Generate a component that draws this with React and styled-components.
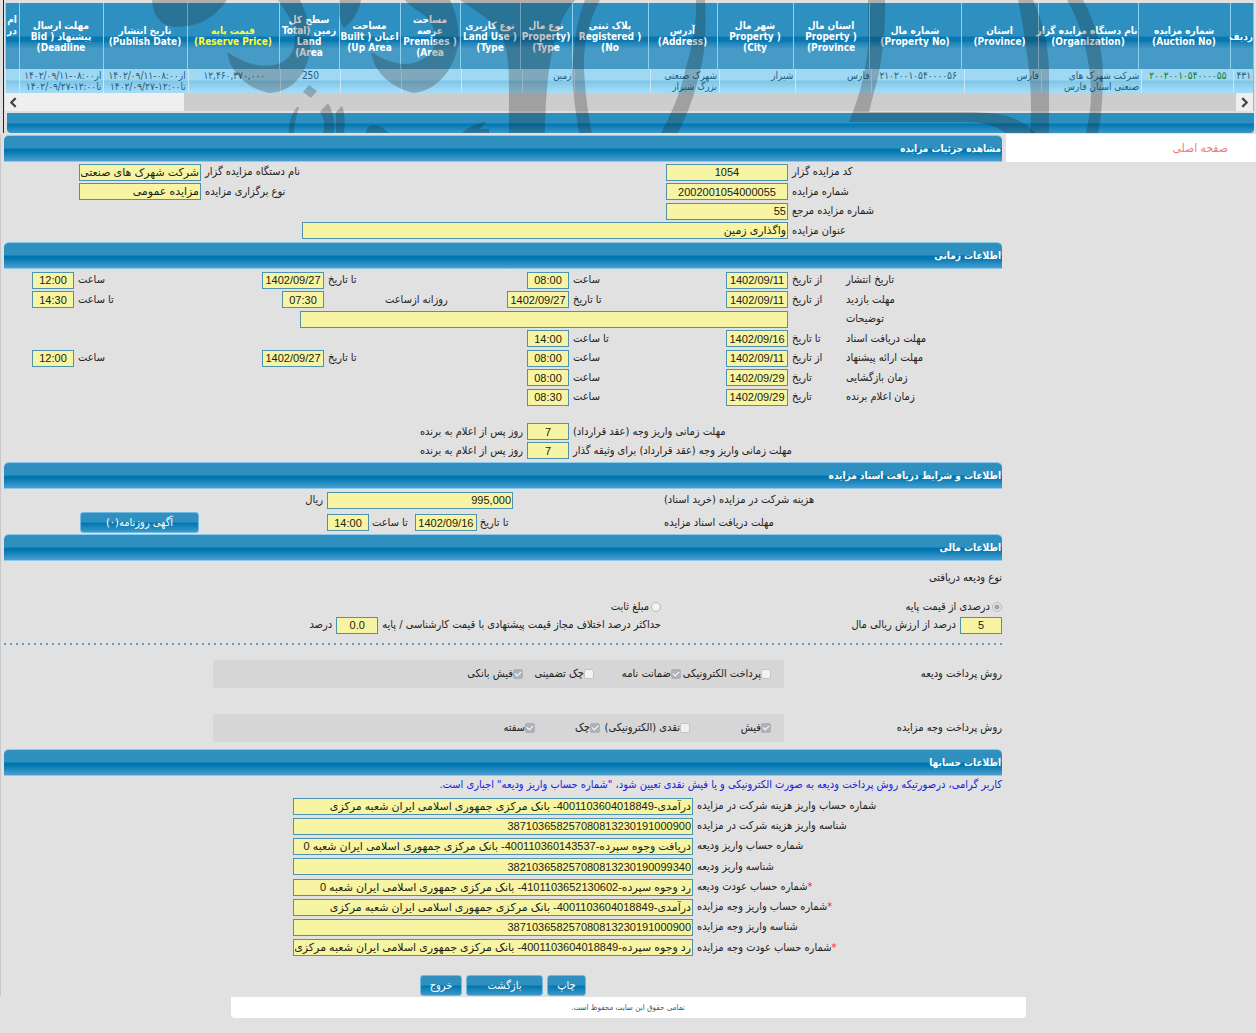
import React, { useId } from "react";
import styled, { createGlobalStyle } from "styled-components";

const columns = [
  { width: 23, lines: ["ردیف"] },
  { width: 92, lines: ["شماره مزایده", "(Auction No)"] },
  { width: 100, lines: ["نام دستگاه مزایده گزار", "(Organization)"] },
  { width: 77, lines: ["استان", "(Province)"] },
  { width: 92, lines: ["شماره مال", "(Property No)"] },
  { width: 76, lines: ["استان مال", "( Property", "Province)"] },
  { width: 76, lines: ["شهر مال", "( Property", "City)"] },
  { width: 69, lines: ["آدرس", "(Address)"] },
  { width: 76, lines: ["پلاک ثبتی", "( Registered", "No)"] },
  { width: 52, lines: ["نوع مال", "(Property", "Type)"] },
  { width: 60, lines: ["نوع کاربری", "( Land Use", "Type)"] },
  { width: 60, lines: ["مساحت", "عرصه", "( Premises", "Area)"] },
  { width: 61, lines: ["مساحت", "اعیان ( Built", "Up Area)"] },
  { width: 60, lines: ["سطح کل", "زمین (Total", "Land", "Area)"] },
  { width: 92, lines: ["قیمت پایه", "(Reserve Price)"], sorted: true },
  { width: 84, lines: ["تاریخ انتشار", "(Publish Date)"] },
  { width: 84, lines: ["مهلت ارسال", "پیشنهاد ( Bid", "Deadline)"] },
  { width: 14, lines: ["ام", "در", "\u00a0", "\u00a0"] },
];

const cells = [
  { lines: ["۴۳۱"], align: "center" },
  { lines: ["۲۰۰۲۰۰۱۰۵۴۰۰۰۰۵۵"], align: "center", green: true },
  { lines: ["شرکت شهرک های", "صنعتی استان فارس"] },
  { lines: ["فارس"] },
  { lines: ["۲۱۰۲۰۰۱۰۵۴۰۰۰۰۵۶"], align: "center" },
  { lines: ["فارس"] },
  { lines: ["شیراز"] },
  { lines: ["شهرک صنعتی", "بزرگ شیراز"] },
  { lines: [] },
  { lines: ["زمین"] },
  { lines: [] },
  { lines: [] },
  { lines: [] },
  { lines: ["250"], align: "center" },
  { lines: ["۱۲,۴۶۰,۳۷۰,۰۰۰"], align: "center" },
  { lines: ["از۰۸:۰۰-۱۴۰۲/۰۹/۱۱", "تا۱۲:۰۰-۱۴۰۲/۰۹/۲۷"] },
  { lines: ["از۰۸:۰۰-۱۴۰۲/۰۹/۱۱", "تا۱۲:۰۰-۱۴۰۲/۰۹/۲۷"] },
  { lines: [] },
];

const schedule = [
  {
    title: "تاریخ انتشار",
    fields: [
      ["از تاریخ", "1402/09/11"],
      ["ساعت", "08:00"],
      ["تا تاریخ", "1402/09/27"],
      ["ساعت", "12:00"],
    ],
  },
  {
    title: "مهلت بازدید",
    fields: [
      ["از تاریخ", "1402/09/11"],
      ["تا تاریخ", "1402/09/27"],
      ["روزانه ازساعت", "07:30"],
      ["تا ساعت", "14:30"],
    ],
  },
  { title: "توضیحات", note: true },
  {
    title: "مهلت دریافت اسناد",
    fields: [
      ["تا تاریخ", "1402/09/16"],
      ["تا ساعت", "14:00"],
    ],
  },
  {
    title: "مهلت ارائه پیشنهاد",
    fields: [
      ["از تاریخ", "1402/09/11"],
      ["ساعت", "08:00"],
      ["تا تاریخ", "1402/09/27"],
      ["ساعت", "12:00"],
    ],
  },
  {
    title: "زمان بازگشایی",
    fields: [
      ["تاریخ", "1402/09/29"],
      ["ساعت", "08:00"],
    ],
  },
  {
    title: "زمان اعلام برنده",
    fields: [
      ["تاریخ", "1402/09/29"],
      ["ساعت", "08:30"],
    ],
  },
];

const depositMethods = [
  { label: "پرداخت الکترونیکی", checked: false, width: 90 },
  { label: "ضمانت نامه", checked: true, width: 87 },
  { label: "چک تضمینی", checked: false, width: 71 },
  { label: "فیش بانکی", checked: true, width: 60 },
];

const paymentMethods = [
  { label: "فیش", checked: true, width: 81 },
  { label: "نقدی (الکترونیکی)", checked: false, width: 90 },
  { label: "چک", checked: true, width: 65 },
  { label: "سفته", checked: true, width: 60 },
];

const accounts = [
  {
    label: "شماره حساب واریز هزینه شرکت در مزایده",
    value: "درآمدی-4001103604018849- بانک مرکزی جمهوری اسلامی ایران شعبه مرکزی",
  },
  {
    label: "شناسه واریز هزینه شرکت در مزایده",
    value: "387103658257080813230191000900",
  },
  {
    label: "شماره حساب واریز ودیعه",
    value: "دریافت وجوه سپرده-400110360143537- بانک مرکزی جمهوری اسلامی ایران شعبه 0",
  },
  { label: "شناسه واریز ودیعه", value: "382103658257080813230190099340" },
  {
    label: "شماره حساب عودت ودیعه",
    value: "رد وجوه سپرده-4101103652130602- بانک مرکزی جمهوری اسلامی ایران شعبه 0",
    required: true,
  },
  {
    label: "شماره حساب واریز وجه مزایده",
    value: "درآمدی-4001103604018849- بانک مرکزی جمهوری اسلامی ایران شعبه مرکزی",
    required: true,
  },
  {
    label: "شناسه واریز وجه مزایده",
    value: "387103658257080813230191000900",
  },
  {
    label: "شماره حساب عودت وجه مزایده",
    value: "رد وجوه سپرده-4001103604018849- بانک مرکزی جمهوری اسلامی ایران شعبه مرکزی",
    required: true,
  },
];

function Lines({ lines }) {
  return lines.map((line, i) => <Line key={i}>{line}</Line>);
}

function Field({ label, value, width, center, after, required }) {
  const id = useId();
  return (
    <>
      <Label htmlFor={id} $after={after}>
        {required ? <Star>*</Star> : null}
        {label}
      </Label>
      <Input id={id} $width={width} $center={center} defaultValue={value} readOnly />
    </>
  );
}

function timeWidth(value) {
  return value.length > 5 ? 62 : 42;
}

function Methods({ title, items }) {
  return (
    <MethodRow>
      <legend>{title}</legend>
      <MethodBox>
        {items.map((item) => (
          <Choice key={item.label} $width={item.width}>
            <Check type="checkbox" defaultChecked={item.checked} disabled />
            {item.label}
          </Choice>
        ))}
      </MethodBox>
    </MethodRow>
  );
}

function Columns({ first }) {
  return (
    <colgroup>
      {columns.map((col, i) => (
        <Col key={i} $width={i === 0 ? first : col.width} />
      ))}
    </colgroup>
  );
}

function Watermark() {
  return (
    <Mark viewBox="0 0 1256 133" preserveAspectRatio="none" aria-hidden="true">
      <path d="M152 0C153 18 163 27 177 27C198 27 215 18 227 0Z" />
      <path d="M278 0H300C312 25 315 50 303 72C294 87 283 92 269 93C246 88 230 72 227 52C242 62 258 68 274 65C291 62 296 48 295 34C294 22 286 12 278 0Z" />
      <path d="M340 0H361C359 12 352 22 344 28C339 21 337 9 340 0Z" />
      <path d="M405 0H450C462 25 461 52 448 71C438 85 426 92 414 93C391 88 374 72 371 52C387 62 402 67 417 62C438 55 440 34 428 19C421 11 412 9 405 0Z" />
      <path d="M460 0H575C560 18 547 42 545 133H509C508 100 512 62 503 39C496 22 477 12 460 0Z" />
      <path d="M585 0H600C588 22 583 48 584 68C585 92 588 114 592 133H579C574 100 570 75 574 48C576 28 580 12 585 0Z" />
      <path d="M696 0H705C706 26 706 47 701 67C696 91 688 113 678 133H661C673 111 682 88 686 67C693 44 697 22 696 0Z" />
      <path d="M868 0H885C886 30 881 72 874 92L869 112H965C1000 112 1018 116 1036 133H1005C996 126 984 122 967 122H849C858 100 865 78 868 47Z" />
      <path d="M1018 0H1033C1043 22 1049 46 1049 74V133H1030C1032 108 1031 84 1028 62C1025 38 1022 18 1018 0Z" />
      <path d="M1067 0H1083C1096 24 1103 50 1103 76C1103 98 1101 118 1098 133H1086C1092 108 1092 88 1089 67C1085 40 1078 18 1067 0Z" />
      <path d="M309 85L317 91L311 98L303 92Z" />
      <path d="M297 107C291 115 288 124 289 133H294C294 124 297 115 299 107Z" />
      <path d="M328 103L320 112C325 119 325 126 323 133H334C335 121 333 111 328 103Z" />
      <path d="M342 106L336 112V133H344C345 122 345 113 342 106Z" />
      <path d="M366 133C367 122 377 125 381 127L389 133Z" />
      <path d="M462 133C468 127 480 122 486 122L480 129H489V133Z" />
    </Mark>
  );
}

export default function App() {
  const noteId = useId();
  return (
    <Page dir="rtl" lang="fa">
      <GlobalStyle />
      <Results>
        <GridView>
          <Table>
            <Columns first={23} />
            <thead>
              <tr>
                {columns.map((col, i) => (
                  <Th key={i} $sorted={col.sorted}>
                    <Lines lines={col.lines} />
                  </Th>
                ))}
              </tr>
            </thead>
          </Table>
          <Table>
            <Columns first={19} />
            <tbody>
              <tr>
                {cells.map((cell, i) => (
                  <Td key={i} $align={cell.align} $green={cell.green}>
                    <Lines lines={cell.lines} />
                  </Td>
                ))}
              </tr>
            </tbody>
          </Table>
          <ScrollBar>
            <ScrollButton type="button" aria-label="راست">
              <Chevron viewBox="0 0 10 10">
                <path d="M3 1l4 4-4 4" />
              </Chevron>
            </ScrollButton>
            <Thumb />
            <ScrollButton type="button" aria-label="چپ">
              <Chevron viewBox="0 0 10 10">
                <path d="M7 1L3 5l4 4" />
              </Chevron>
            </ScrollButton>
          </ScrollBar>
        </GridView>
        <Pager />
        <Watermark />
      </Results>

      <Body>
        <SideMenu>
          <a href="#home">صفحه اصلی</a>
        </SideMenu>

        <Main>
          <Bar>مشاهده جزئیات مزایده</Bar>
          <InfoGrid>
            <Field label="کد مزایده گزار" value="1054" center />
            <Field label="نام دستگاه مزایده گزار" value="شرکت شهرک های صنعتی استان فارس" />
            <span />
            <Field label="شماره مزایده" value="2002001054000055" center />
            <Field label="نوع برگزاری مزایده" value="مزایده عمومی" />
            <span />
            <Field label="شماره مزایده مرجع" value="55" />
            <NewRow />
            <Field label="عنوان مزایده" value="واگذاری زمین" width={486} />
          </InfoGrid>

          <Bar>اطلاعات زمانی</Bar>
          <TimeGrid>
            {schedule.map((row) => (
              <TimeRow key={row.title}>
                {row.note ? (
                  <>
                    <Label htmlFor={noteId} $after={0}>{row.title}</Label>
                    <span />
                    <Input id={noteId} $width={488} readOnly />
                  </>
                ) : (
                  <>
                    <Title>{row.title}</Title>
                    {row.fields.map(([label, value], i) => (
                      <Field
                        key={i}
                        label={label}
                        value={value}
                        width={timeWidth(value)}
                        after={label.startsWith("روزانه") ? 61 : 4}
                        center
                      />
                    ))}
                  </>
                )}
              </TimeRow>
            ))}
          </TimeGrid>
          <Deadlines>
            <DeadlineRow>
              <Field label="مهلت زمانی واریز وجه (عقد قرارداد)" value="7" width={42} center />
              <Unit>روز پس از اعلام به برنده</Unit>
            </DeadlineRow>
            <DeadlineRow>
              <Field
                label="مهلت زمانی واریز وجه (عقد قرارداد) برای وثیقه گذار"
                value="7"
                width={42}
                center
              />
              <Unit>روز پس از اعلام به برنده</Unit>
            </DeadlineRow>
          </Deadlines>

          <Bar>اطلاعات و شرایط دریافت اسناد مزایده</Bar>
          <Documents>
            <Label htmlFor="cost" $after={0}>هزینه شرکت در مزایده (خرید اسناد)</Label>
            <Group>
              <Input id="cost" $width={186} defaultValue="995,000" readOnly />
            </Group>
            <Unit>ریال</Unit>
            <Title>مهلت دریافت اسناد مزایده</Title>
            <Group>
              <Field label="تا تاریخ" value="1402/09/16" width={62} after={3} center />
              <Spacer />
              <Field label="تا ساعت" value="14:00" width={42} after={3} center />
            </Group>
            <NewsCell>
              <Button type="button" $width={119}>آگهی روزنامه(۰)</Button>
            </NewsCell>
          </Documents>

          <Bar>اطلاعات مالی</Bar>
          <Finance>
            <DepositTitle>نوع ودیعه دریافتی</DepositTitle>
            <Choice>
              <Radio type="radio" name="deposit" defaultChecked disabled />
              درصدی از قیمت پایه
            </Choice>
            <Choice>
              <Radio type="radio" name="deposit" disabled />
              مبلغ ثابت
            </Choice>
            <Percent>
              <Input id="percent" $width={42} $center defaultValue="5" readOnly />
              <label htmlFor="percent">درصد از ارزش ریالی مال</label>
            </Percent>
            <Percent>
              <label htmlFor="diff">
                حداکثر درصد اختلاف مجاز قیمت پیشنهادی با قیمت کارشناسی / پایه
              </label>
              <Input id="diff" $width={42} $center defaultValue="0.0" readOnly />
              <span>درصد</span>
            </Percent>
          </Finance>
          <Dotted />
          <MethodList>
            <Methods title="روش پرداخت ودیعه" items={depositMethods} />
            <Methods title="روش پرداخت وجه مزایده" items={paymentMethods} />
          </MethodList>

          <Bar>اطلاعات حسابها</Bar>
          <Notice>
            کاربر گرامی، درصورتیکه روش پرداخت ودیعه به صورت الکترونیکی و یا فیش نقدی تعیین شود،
            "شماره حساب واریز ودیعه" اجباری است.
          </Notice>
          <AccountGrid>
            {accounts.map((account) => (
              <Field
                key={account.label}
                label={account.label}
                value={account.value}
                required={account.required}
                width={400}
              />
            ))}
          </AccountGrid>
          <Actions>
            <Button type="button" $width={39}>چاپ</Button>
            <Button type="button" $width={77}>بازگشت</Button>
            <Button type="button" $width={42}>خروج</Button>
          </Actions>
        </Main>
      </Body>
      <Footer>تمامی حقوق این سایت محفوظ است.</Footer>
    </Page>
  );
}

const GlobalStyle = createGlobalStyle`
  * {
    box-sizing: border-box;
  }
  body {
    margin: 0;
    background: #e1e1e1;
  }
  button, input {
    font-family: inherit;
    margin: 0;
  }
`;

const Page = styled.div`
  min-height: 100vh;
  font-family: "DejaVu Sans Condensed", "DejaVu Sans", sans-serif;
  font-size: 11px;
  line-height: 12px;
  color: #222222;
  overflow: hidden;
`;

const Results = styled.header`
  position: relative;
  margin-left: 3px;
  padding: 3px 2px 0 1px;
  border-left: 1px solid #222222;
  height: 133px;
`;

const GridView = styled.div`
  overflow: hidden;
  border-right: 1px solid #7fbfe3;
`;

const Table = styled.table`
  width: 1248px;
  table-layout: fixed;
  border-collapse: collapse;
  font-size: 10px;
`;

const Col = styled.col`
  width: ${(p) => p.$width}px;
`;

const Line = styled.div`
  white-space: nowrap;
`;

const Th = styled.th`
  height: 66px;
  padding: 0;
  border-left: 1px solid #8fd0ef;
  background: linear-gradient(#2e90c0 0 33px, #0a78b0 34px 38px, #2184b8 40px, #459bc5 46px 66px);
  color: ${(p) => (p.$sorted ? "#ffff33" : "#ffffff")};
  font-weight: 700;
  line-height: 11px;
`;

const Td = styled.td`
  height: 23px;
  padding: 1px 2px;
  overflow: hidden;
  border-left: 1px solid #c8e8f8;
  background: linear-gradient(#a0d7f2 0 11px, #7dc6e8 12px, #a4daf4 22px);
  color: ${(p) => (p.$green ? "#0a7a2a" : "#1d5f80")};
  text-align: ${(p) => p.$align || "start"};
  vertical-align: top;
  line-height: 11px;
`;

const ScrollBar = styled.div`
  display: flex;
  height: 18px;
  background: #efefef;
`;

const ScrollButton = styled.button`
  width: 17px;
  padding: 0;
  border: 0;
  background: #efefef;
`;

const Chevron = styled.svg`
  display: block;
  width: 11px;
  margin: 0 auto;
  fill: none;
  stroke: #444444;
  stroke-width: 2;
`;

const Thumb = styled.div`
  flex: 1;
  margin-left: 162px;
  background: #cdcdcd;
`;

const Pager = styled.div`
  height: 20px;
  margin: 2px 0 0 2px;
  border-radius: 0 0 4px 4px;
  background: linear-gradient(#2e90c0 0 10px, #0076b0 11px, #3c98c9);
`;

const Mark = styled.svg`
  position: absolute;
  inset: 0 0 0 -4px;
  width: calc(100% + 4px);
  height: 133px;
  fill: #1c1c1c;
  fill-opacity: 0.25;
  pointer-events: none;
`;

const Body = styled.div`
  display: flex;
  margin-top: 1px;
  border-left: 1px solid #c8c8c8;
`;

const SideMenu = styled.nav`
  flex: 0 0 250px;
  align-self: flex-start;
  height: 28px;
  padding: 8px 28px;
  background: #ffffff;
  font-size: 12px;

  a {
    color: #e88080;
    text-decoration: none;
  }
`;

const Main = styled.main`
  flex: 1;
  min-width: 0;
  margin: 1px 4px 0 3px;
`;

const Bar = styled.h2`
  height: 27px;
  margin: 0;
  padding: 0 1px;
  border: 1px solid #8ccaec;
  border-width: 1px 0;
  border-radius: 5px 5px 0 0;
  background: linear-gradient(#2f90c0 0 12px, #0076b0 13px 15px, #4aa0cf);
  color: #ffffff;
  font-size: 10px;
  line-height: 25px;
`;

const Label = styled.label`
  padding-left: ${(p) => p.$after ?? 4}px;
  text-align: end;
  white-space: nowrap;
`;

const Title = styled.span`
  text-align: end;
  white-space: nowrap;
`;

const Unit = styled.span`
  padding-right: 4px;
`;

const Star = styled.span`
  color: #ff2020;
`;

const Input = styled.input`
  width: ${(p) => (p.$width ? `${p.$width}px` : "122px")};
  height: 17px;
  padding: 0 1px;
  border: 1px solid #4d92ae;
  border-radius: 0;
  background: #f7f4a3;
  color: #222211;
  font-family: "Liberation Sans", "DejaVu Sans", sans-serif;
  font-size: 11px;
  text-align: ${(p) => (p.$center ? "center" : "start")};
  outline: none;
`;

const InfoGrid = styled.div`
  display: grid;
  grid-template-columns: 214px 122px 1fr 122px 75px;
  grid-auto-rows: 20px 19px;
  align-items: center;
  padding-bottom: 2px;
`;

const NewRow = styled.span`
  grid-column: 3 / -1;
`;

const TimeGrid = styled.div`
  display: grid;
  grid-auto-rows: 20px 19px;
  padding-top: 1px;
`;

const TimeRow = styled.div`
  display: grid;
  grid-template-columns: 156px 58px 62fr 157fr 62fr 183fr 62fr 188fr 70fr;
  align-items: center;
`;

const Deadlines = styled.div`
  display: grid;
  grid-auto-rows: 19px;
  padding: 15px 0 2px;
`;

const DeadlineRow = styled.div`
  display: grid;
  grid-template-columns: 433fr 42px 523fr;
  align-items: center;
`;

const Documents = styled.div`
  display: grid;
  grid-template-columns: 338fr 337fr 323fr;
  grid-template-rows: 22px 23px;
  align-items: center;
`;

const Group = styled.div`
  display: flex;
  align-items: center;
  justify-content: flex-end;
`;

const Spacer = styled.span`
  width: 7px;
`;

const NewsCell = styled.div`
  display: flex;
  justify-content: flex-end;
  padding-left: 76px;
`;

const Finance = styled.div`
  display: grid;
  grid-template-columns: 341fr 657fr;
  align-items: center;
  padding-bottom: 8px;
`;

const DepositTitle = styled.div`
  grid-column: 1 / -1;
  padding: 11px 0 14px;
`;

const Choice = styled.label`
  display: flex;
  align-items: center;
  width: ${(p) => (p.$width ? `${p.$width}px` : "auto")};
  height: 17px;
  white-space: nowrap;
`;

const Percent = styled.div`
  display: flex;
  align-items: center;
  gap: 4px;
  height: 20px;
  white-space: nowrap;
`;

const Radio = styled.input`
  appearance: none;
  width: 10px;
  height: 10px;
  margin-left: 2px;
  border: 1px solid #b8b8b8;
  border-radius: 50%;
  background: #f2f2f2;

  &:checked {
    background: radial-gradient(#a4a4a4 0 2px, #e6e6e6 3px);
  }
`;

const Check = styled.input`
  appearance: none;
  flex: none;
  width: 10px;
  height: 10px;
  border: 1px solid #c4c4c4;
  border-radius: 2px;
  background: #f2f2f2;

  &:checked {
    border-color: #b0b0b8;
    background: #b0b0b8;
  }

  &:checked::before {
    content: "";
    display: block;
    width: 3px;
    height: 5px;
    margin: 0 2px 0 0;
    border: solid #ffffff;
    border-width: 0 1px 1px 0;
    box-sizing: content-box;
    transform: rotate(45deg);
  }
`;

const Dotted = styled.div`
  height: 2px;
  background: repeating-linear-gradient(to left, #5f9fc4 0 2px, transparent 2px 6px);
`;

const MethodList = styled.div`
  display: grid;
  gap: 26px;
  padding: 15px 0 7px;
`;

const MethodRow = styled.fieldset`
  display: flex;
  align-items: center;
  min-width: 0;
  margin: 0;
  padding: 0;
  border: 0;

  legend {
    float: right;
    width: 218px;
    padding: 0;
  }
`;

const MethodBox = styled.div`
  display: flex;
  align-items: center;
  width: 571px;
  height: 28px;
  padding: 0 13px;
  border-radius: 3px;
  background: #d6d6d6;
`;

const Notice = styled.p`
  margin: 0;
  padding: 3px 0 5px;
  color: #1a1ae0;
`;

const AccountGrid = styled.div`
  display: grid;
  grid-template-columns: 309px 1fr;
  grid-auto-rows: 20px 20px 20px 21px;
  align-items: center;
`;

const Actions = styled.div`
  display: flex;
  justify-content: center;
  gap: 4px;
  padding-top: 17px;
`;

const Button = styled.button`
  width: ${(p) => p.$width}px;
  height: 21px;
  padding: 0;
  border: 1px solid #6fbbe2;
  border-radius: 3px;
  background: linear-gradient(#2f90c0 0 9px, #0076b0 10px, #3c98c9);
  color: #ffffff;
  font-size: 11px;
`;

const Footer = styled.footer`
  width: 64%;
  max-width: 795px;
  min-width: 320px;
  height: 21px;
  margin: 1px auto 0;
  border-radius: 0 0 4px 4px;
  background: #ffffff;
  font-size: 8px;
  line-height: 21px;
  text-align: center;
  color: #555555;
`;
